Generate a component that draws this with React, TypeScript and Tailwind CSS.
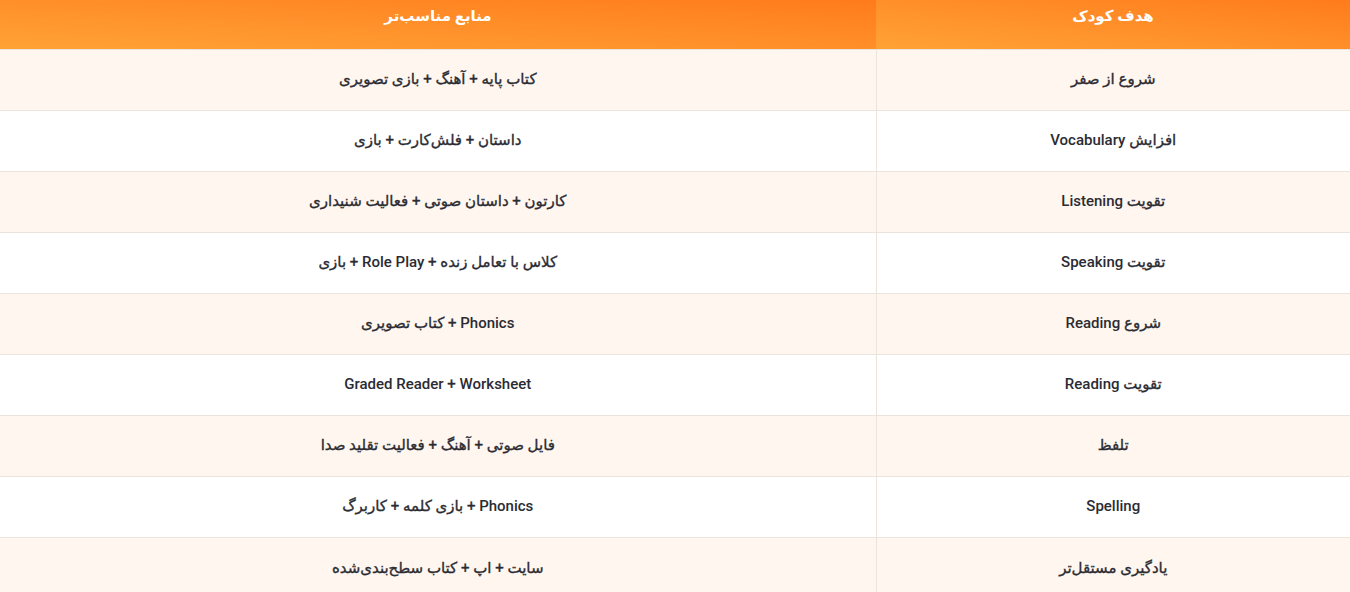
const rows: [string, string][] = [
  ["شروع از صفر", "کتاب پایه + آهنگ + بازی تصویری"],
  ["افزایش Vocabulary", "داستان + فلش‌کارت + بازی"],
  ["تقویت Listening", "کارتون + داستان صوتی + فعالیت شنیداری"],
  ["تقویت Speaking", "کلاس با تعامل زنده + Role Play + بازی"],
  ["شروع Reading", "Phonics + کتاب تصویری"],
  ["تقویت Reading", "Graded Reader + Worksheet"],
  ["تلفظ", "فایل صوتی + آهنگ + فعالیت تقلید صدا"],
  ["Spelling", "Phonics + بازی کلمه + کاربرگ"],
  ["یادگیری مستقل‌تر", "سایت + اپ + کتاب سطح‌بندی‌شده"],
];

// Latin runs keep Roboto medium, Persian runs get a slightly thickened stroke
function Mixed({ text }: { text: string }) {
  const parts = text.split(/([A-Za-z][A-Za-z ]*[A-Za-z]|[A-Za-z])/);
  return (
    <>
      {parts.map((p, i) =>
        /[A-Za-z]/.test(p) ? (
          <span key={i} className="font-medium">{p}</span>
        ) : (
          <span key={i} className="font-normal [-webkit-text-stroke:0.35px]">{p}</span>
        )
      )}
    </>
  );
}

export default function App() {
  return (
    <div
      dir="rtl"
      className="w-full min-h-screen bg-white"
      style={{ fontFamily: '"Roboto", "DejaVu Sans", sans-serif' }}
    >
      <table className="w-full table-fixed border-collapse text-[15px] text-[#2b2b33]">
        <colgroup>
          <col className="w-[474px]" />
          <col />
        </colgroup>
        <thead>
          <tr className="h-[49px]">
            <th className="bg-gradient-to-bl from-[#ff7b1b] to-[#ffa236] text-white font-bold text-[15px] pb-[16px]">
              هدف کودک
            </th>
            <th className="bg-gradient-to-bl from-[#ff7b1b] to-[#ffa236] text-white font-bold text-[15px] pb-[16px]">
              منابع مناسب‌تر
            </th>
          </tr>
        </thead>
        <tbody>
          {rows.map(([goal, res], i) => (
            <tr
              key={i}
              className={`h-[61px] border-t border-[#ebe4dc] ${i % 2 === 0 ? "bg-[#fff7ef]" : "bg-white"}`}
            >
              <td className="text-center border-l border-[#ebe4dc]">
                <Mixed text={goal} />
              </td>
              <td className="text-center">
                <Mixed text={res} />
              </td>
            </tr>
          ))}
        </tbody>
      </table>
    </div>
  );
}
